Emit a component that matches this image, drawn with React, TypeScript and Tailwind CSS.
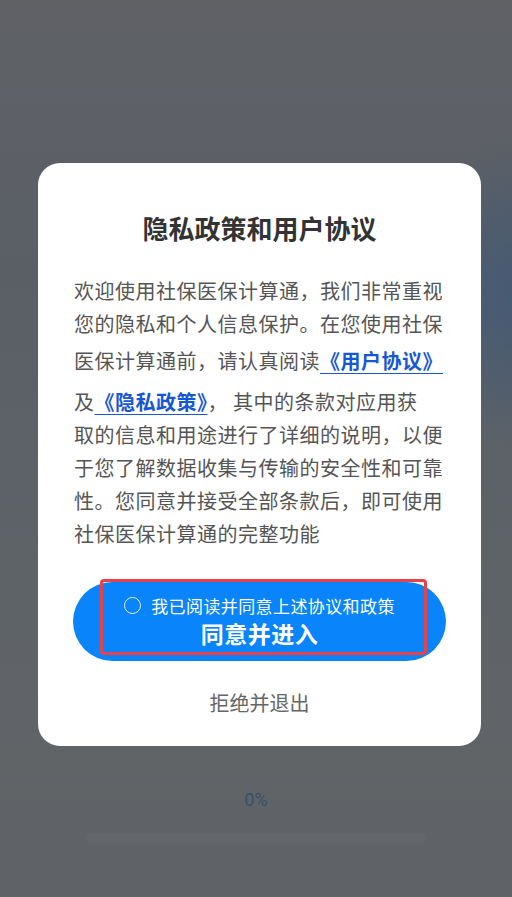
const font = { fontFamily: '"Noto Sans CJK SC", "Noto Sans", sans-serif' };

function Link({ children }: { children: React.ReactNode }) {
  return (
    <span className="font-bold text-[#1757d6] underline decoration-[#1757d6] decoration-1 underline-offset-[4px]">
      {children}
    </span>
  );
}

export default function App() {
  return (
    <div
      style={font}
      className="flex h-[897px] w-full flex-col overflow-hidden bg-[radial-gradient(ellipse_90px_160px_at_100%_33%,rgba(62,88,120,0.75),transparent),linear-gradient(180deg,#5f6165,#5a5f66_30%,#5e6368_60%,#616467_85%,#5f6266)]"
    >
      <div className="ml-[38px] mt-[163px] flex w-[443px] flex-col rounded-[22px] bg-white px-[35px] pb-[28px] pt-[45px]">
        <h1 className="text-center text-[26px] font-bold leading-[39px] text-[#333]">隐私政策和用户协议</h1>

        <div className="mt-[27px] pl-[1px] text-[20px] leading-[33px] tracking-[0.5px] text-[#555] whitespace-nowrap">
          <div>欢迎使用社保医保计算通，我们非常重视</div>
          <div>您的隐私和个人信息保护。在您使用社保</div>
          <div className="py-[4px]">
            医保计算通前，请认真阅读<Link>《用户协议》</Link>
          </div>
          <div className="pt-[4px]">
            及<Link>《隐私政策》</Link>，&nbsp;其中的条款对应用获
          </div>
          <div>取的信息和用途进行了详细的说明，以便</div>
          <div>于您了解数据收集与传输的安全性和可靠</div>
          <div>性。您同意并接受全部条款后，即可使用</div>
          <div>社保医保计算通的完整功能</div>
        </div>

        <button className="relative mt-[32px] flex h-[79px] w-full flex-col items-center justify-center rounded-full bg-[#0a84fb] pb-[2px] text-white">
          <div className="flex items-center gap-[10px] text-[17px] leading-[24px] tracking-[0.4px]">
            <span className="h-[17px] w-[17px] rounded-full border-[1.5px] border-[#e6f0fb]" />
            我已阅读并同意上述协议和政策
          </div>
          <div className="text-[23px] font-bold leading-[30px] tracking-[0.5px]">同意并进入</div>
          <div className="absolute left-[27px] right-[19px] top-[-3px] bottom-[6px] rounded-[4px] border-[3px] border-[#e8414b]" />
        </button>

        <div className="mt-[27px] text-center text-[20px] leading-[30px] text-[#666]">拒绝并退出</div>
      </div>

      <div
        className="mt-[42px] self-center text-[18px] leading-[24px] text-[#34506c]"
        style={{ fontFamily: 'Roboto, "Noto Sans", sans-serif' }}
      >
        0%
      </div>
      <div className="mt-[21px] h-[10px] w-[340px] self-center rounded-full bg-[#63666a]" />
    </div>
  );
}
